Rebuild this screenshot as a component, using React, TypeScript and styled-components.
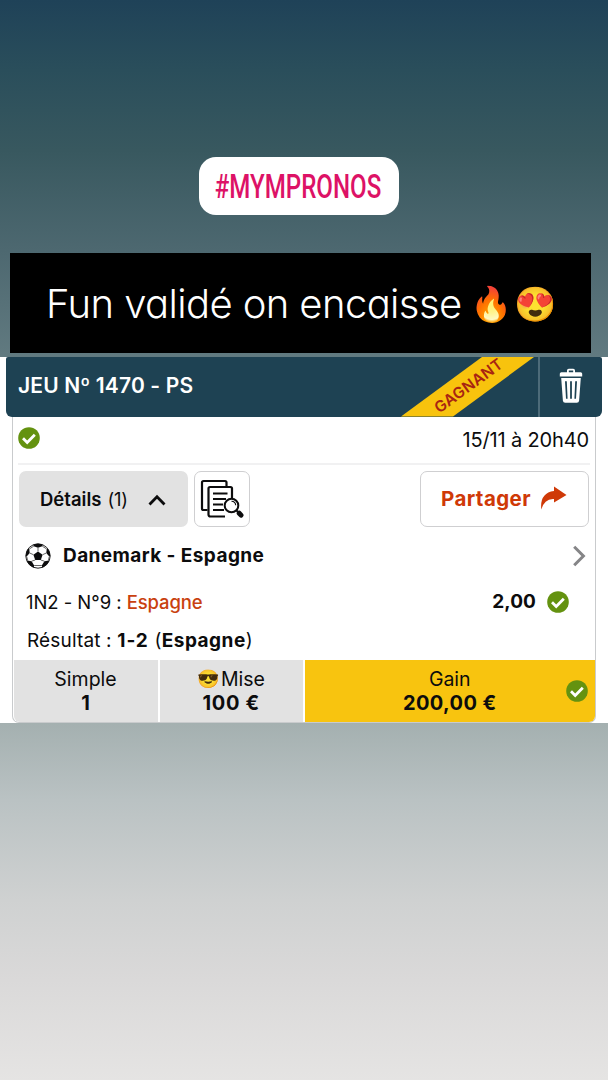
import React from 'react';
import styled, { createGlobalStyle } from 'styled-components';

const GlobalStyle = createGlobalStyle`
  * { box-sizing: border-box; }
  body { margin: 0; font-family: Inter, 'Liberation Sans', sans-serif; color: #0c0c0d; }
`;

const Story = styled.main`
  display: flex;
  flex-direction: column;
  width: 608px;
  height: 1080px;
  overflow: hidden;
  background: linear-gradient(180deg, #1f4258 0px, #2a4e5b 70px, #38585f 150px, #4d6870 250px,
    #617a80 357px, #a4b0b0 723px, #bac2c3 800px, #cfd1d1 900px, #dad9d9 980px, #e5e4e3 1080px);
`;

const Text = styled.span<{ $size?: number; $weight?: number; $track?: number; $color?: string; $wide?: boolean }>`
  font-size: ${p => p.$size ?? 19}px;
  font-weight: ${p => p.$weight ?? 400};
  font-optical-sizing: ${p => (p.$wide ? 'none' : 'auto')};
  letter-spacing: ${p => p.$track ?? 0}px;
  color: ${p => p.$color ?? 'inherit'};
  line-height: 24px;
  white-space: pre;
`;

const Hashtag = styled.div`
  display: flex;
  align-items: center;
  justify-content: center;
  align-self: center;
  width: 200px;
  height: 58px;
  margin: 157px 11px 0 0;
  border-radius: 17px;
  background: #fff;
`;

const HashtagText = styled.span`
  font: 500 33px/58px Roboto, sans-serif;
  color: #dd1266;
  transform: translateY(1px) scaleX(0.73);
`;

const Caption = styled.div`
  display: flex;
  align-items: center;
  width: 581px;
  height: 100px;
  margin: 38px 0 0 10px;
  padding: 2px 0 0 36px;
  background: #000;
  color: #fff;
`;

const CaptionText = styled.span`
  font-size: 40px;
  font-weight: 275;
  line-height: 50px;
  letter-spacing: -0.6px;
  font-feature-settings: 'cv11';
  white-space: pre;
`;

const Emoji = styled.span<{ $size: number; $gap?: number }>`
  font-family: 'Noto Color Emoji', sans-serif;
  font-size: ${p => p.$size}px;
  line-height: 1;
  margin-left: ${p => p.$gap ?? 0}px;
`;

const Ticket = styled.section`
  display: flex;
  flex-direction: column;
  height: 366px;
  margin-top: 4px;
  padding: 0 6px;
  background: #fff;
`;

const TicketHeader = styled.header`
  display: flex;
  align-items: stretch;
  height: 59.5px;
  flex: none;
  padding-left: 12px;
  border-radius: 2px 2px 6px 6px;
  background: #1e4253;
  color: #fff;
`;

const Title = styled(Text)`
  align-self: center;
  margin-top: -1px;
`;

const Ribbon = styled.div`
  display: flex;
  align-items: center;
  justify-content: center;
  width: 133px;
  margin: 0 4px 0 auto;
  background: #f8c30d;
  clip-path: polygon(81px 0, 133px 0, 52px 100%, 0 100%);
`;

const RibbonText = styled.span`
  font-size: 15.5px;
  font-weight: 600;
  letter-spacing: 0.3px;
  line-height: 20px;
  color: #a82412;
  transform: translate(1.5px, -1px) rotate(-36deg);
`;

const DeleteButton = styled.div`
  display: flex;
  align-items: center;
  justify-content: center;
  width: 64px;
  padding: 0 1px 2px 0;
  border-left: 2px solid #4d6b79;
`;

const TicketBody = styled.div`
  display: flex;
  flex-direction: column;
  flex: 1;
  margin: 0 6px 0;
  border: solid #c9cbcd;
  border-width: 0 1.5px 1.5px;
  border-radius: 0 0 7px 7px;
`;

const StatusRow = styled.div`
  display: flex;
  align-items: center;
  justify-content: space-between;
  height: 48px;
  margin: 0 5px;
  padding: 0 1px 3px 0;
  border-bottom: 2px solid #f1f1f2;

  ${Text} { margin-top: 3px; }
`;

const Actions = styled.div`
  display: flex;
  height: 56px;
  margin: 6px 6px 0 6px;
`;

const Button = styled.div<{ $width: number; $filled?: boolean }>`
  display: flex;
  align-items: center;
  width: ${p => p.$width}px;
  padding-top: 1px;
  border: ${p => (p.$filled ? '2px solid #e2e2e2' : '1.5px solid #cfcfd1')};
  border-radius: 7px;
  background: ${p => (p.$filled ? '#e2e2e2' : '#fff')};
`;

const DetailsButton = styled(Button)`
  padding-left: 19px;
  gap: 6px;
  margin-right: 6px;

  svg { margin: 2px 0 0 14px; }
`;

const SlipButton = styled(Button)`
  justify-content: center;
  padding-top: 0;
`;

const ShareButton = styled(Button)`
  margin-left: auto;
  padding-left: 20px;
  gap: 9px;

  svg { margin-top: -3px; }
`;

const MatchRow = styled.div`
  display: flex;
  align-items: center;
  height: 58px;
  padding: 1px 9px 0 12px;
  gap: 12px;

  svg:last-child { margin-left: auto; }
`;

const BetRow = styled.div`
  display: flex;
  align-items: center;
  height: 35px;
  padding: 0 26px 0 13px;
`;

const Odds = styled(Text)`
  margin: 0 11px 0 auto;
`;

const ResultRow = styled.div`
  display: flex;
  align-items: center;
  height: 39px;
  padding: 4px 0 0 14px;
`;

const Footer = styled.footer`
  display: flex;
  gap: 2px;
  margin: auto 0.5px 0.5px;
  height: 62px;
`;

const Cell = styled.div<{ $width?: number }>`
  display: flex;
  flex-direction: column;
  align-items: center;
  justify-content: center;
  position: relative;
  flex: ${p => (p.$width ? `0 0 ${p.$width}px` : 1)};
  background: #e2e2e2;

  &:first-child { border-bottom-left-radius: 6px; }
`;

const GainCell = styled(Cell)`
  background: #f8c40f;
  border-bottom-right-radius: 6px;
`;

const CellLabel = styled.div`
  display: flex;
  align-items: center;
  gap: 1px;
  height: 25px;
`;

const WonMark = styled.span`
  position: absolute;
  right: 6.5px;
  top: 20px;
  display: flex;
`;

const Check = () => (
  <svg width="22" height="22" viewBox="0 0 22 22">
    <circle cx="11" cy="11" r="10.8" fill="#649210" />
    <path d="M5 11.200l4.200 4.200 7.600-7.700" fill="none" stroke="#fff" strokeWidth="2.800" />
  </svg>
);

const Trash = () => (
  <svg width="24" height="36" viewBox="0 0 24 36" fill="#fff">
    <path d="M8 4.200V2.600Q8 .8 9.800.8h4.400q1.800 0 1.800 1.800v1.600h5.600q1.600 0 1.600 1.600v2.800H.8V5.800q0-1.600 1.600-1.600zM9.800 4.200h4.400V2.600H9.800z" />
    <path
      fillRule="evenodd"
      d="M2.200 10h19.600l-1.700 22.700q-.2 2.100-2.300 2.100H6.200q-2.100 0-2.300-2.100zM6 13.200l1 17.600h1.600l-.8-17.600zM11.100 13.200v17.600h1.800V13.200zM16.200 13.200l-.8 17.600H17l1-17.600z"
    />
  </svg>
);

const ChevronUp = () => (
  <svg width="18" height="12" viewBox="0 0 18 12">
    <path d="M1.500 10.500L9 2.800l7.500 7.700" fill="none" stroke="#0c0c0d" strokeWidth="2.800" />
  </svg>
);

const ChevronRight = () => (
  <svg width="14" height="22" viewBox="0 0 14 22">
    <path d="M2.200 1.800L11.400 11l-9.200 9.200" fill="none" stroke="#858587" strokeWidth="3" />
  </svg>
);

const SlipSearch = () => (
  <svg width="44" height="40" viewBox="0 0 44 40" fill="none" stroke="#0c0c0d" strokeWidth="2.200" strokeLinejoin="round">
    <path d="M7.500 31H3.500Q2 31 2 29.500V3.500Q2 2 3.500 2H25Q26.500 2 26.500 3.500V7" />
    <path d="M25 37.500H10.500Q8.500 37.500 8.500 35.500V9.500Q8.500 8 10 8H30.500Q32 8 32 9.500V19" />
    <path d="M13 14.500H27.500M13 20H26M13 25.500H23M13 31H24" strokeWidth="1.900" />
    <circle cx="31.500" cy="26.500" r="6.800" fill="#fff" strokeWidth="2" />
    <path d="M31.500 22.300a4.300 4.300 0 0 1 4.200 4" strokeWidth="1.100" />
    <path d="M36.500 31.500l2 2" strokeWidth="2" />
    <path d="M39.200 34.200l1.800 1.900" strokeWidth="5" strokeLinecap="round" />
  </svg>
);

const ShareArrow = () => (
  <svg width="27" height="24" viewBox="0 0 27 24">
    <path d="M14 .5L26.500 9 14 16.500V13Q4.500 12.300 1.300 23.500-.5 7 14 5z" fill="#cf3907" />
  </svg>
);

const Ball = () => (
  <svg width="26" height="26" viewBox="0 0 26 26">
    <defs>
      <clipPath id="ball"><circle cx="13" cy="13" r="12.200" /></clipPath>
    </defs>
    <circle cx="13" cy="13" r="12.200" fill="#fff" stroke="#222" strokeWidth="1" />
    <g clipPath="url(#ball)" fill="#0c0c0d">
      <path d="M13 8.400l4.600 3.300-1.800 5.300h-5.600l-1.800-5.300z" />
      <path d="M7.500 0h11l-1.200 3.200L13 4.800 8.700 3.200z" />
      <path d="M0 5l4.300 1L4.700 10 1.700 13.500-2 12z" />
      <path d="M26 5l-4.300 1-.4 4 3 3.500L28 12z" />
      <path d="M2 17.600l4.600.6 2.600 4.300-1 4.500-7-4z" />
      <path d="M24 17.600l-4.600.6-2.600 4.300 1 4.500 7-4z" />
    </g>
    <path
      d="M13 8.400V4.800M17.600 11.700L21.300 10M15.800 17l3.600 1.200M10.200 17l-3.600 1.200M8.400 11.700L4.700 10M4.300 6l4.400-2.800M21.700 6l-4.400-2.800M1.700 13.500l1 4.200M24.300 13.500l-1 4.200M9.200 22.500h7.600"
      stroke="#555"
      strokeWidth=".9"
      fill="none"
    />
  </svg>
);

export default function App() {
  return (
    <Story>
      <GlobalStyle />
      <Hashtag>
        <HashtagText>#MYMPRONOS</HashtagText>
      </Hashtag>
      <Caption>
        <CaptionText>Fun validé on encaisse</CaptionText>
        <Emoji $size={34} $gap={9}>🔥</Emoji>
        <Emoji $size={34} $gap={1}>😍</Emoji>
      </Caption>
      <Ticket>
        <TicketHeader>
          <Title $size={21} $weight={600} $track={0.15}>JEU Nº 1470 - PS</Title>
          <Ribbon>
            <RibbonText>GAGNANT</RibbonText>
          </Ribbon>
          <DeleteButton>
            <Trash />
          </DeleteButton>
        </TicketHeader>
        <TicketBody>
          <StatusRow>
            <Check />
            <Text $size={20} $track={-0.15}>15/11 à 20h40</Text>
          </StatusRow>
          <Actions>
            <DetailsButton $width={169} $filled>
              <Text $size={18.5} $weight={600}>Détails</Text>
              <Text $size={18.5} $track={-0.2}>(1)</Text>
              <ChevronUp />
            </DetailsButton>
            <SlipButton $width={56}>
              <SlipSearch />
            </SlipButton>
            <ShareButton $width={169}>
              <Text $size={20.5} $weight={650} $track={0.4} $wide $color="#cf3907">Partager</Text>
              <ShareArrow />
            </ShareButton>
          </Actions>
          <MatchRow>
            <Ball />
            <Text $weight={700} $track={0.42} $wide>Danemark - Espagne</Text>
            <ChevronRight />
          </MatchRow>
          <BetRow>
            <Text $size={18.5} $track={-0.05}>1N2 - N°9 : </Text>
            <Text $size={18.5} $weight={500} $track={-0.1} $color="#c9410f">Espagne</Text>
            <Odds $weight={700} $track={0.1} $wide>2,00</Odds>
            <Check />
          </BetRow>
          <ResultRow>
            <Text $track={0.15}>Résultat : </Text>
            <Text $weight={700} $track={1} $wide>1-2</Text>
            <Text $track={0.3}> (</Text>
            <Text $weight={700} $track={0.5} $wide>Espagne</Text>
            <Text>)</Text>
          </ResultRow>
          <Footer>
            <Cell $width={144}>
              <CellLabel><Text $size={19.5}>Simple</Text></CellLabel>
              <Text $size={20} $weight={700}>1</Text>
            </Cell>
            <Cell $width={143.5}>
              <CellLabel>
                <Emoji $size={18}>😎</Emoji>
                <Text $size={19.5}>Mise</Text>
              </CellLabel>
              <Text $size={20} $weight={700} $track={0.7} $wide>100 €</Text>
            </Cell>
            <GainCell>
              <CellLabel><Text $size={19.5}>Gain</Text></CellLabel>
              <Text $size={20} $weight={700} $track={0.4} $wide>200,00 €</Text>
              <WonMark><Check /></WonMark>
            </GainCell>
          </Footer>
        </TicketBody>
      </Ticket>
    </Story>
  );
}
